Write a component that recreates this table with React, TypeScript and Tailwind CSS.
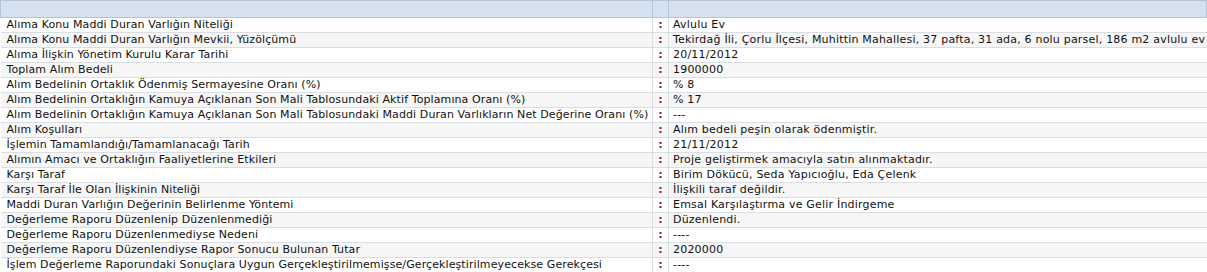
import React from 'react';

const rows: [string, string][] = [
    ['Alıma Konu Maddi Duran Varlığın Niteliği', 'Avlulu Ev'],
    ['Alıma Konu Maddi Duran Varlığın Mevkii, Yüzölçümü', 'Tekirdağ İli, Çorlu İlçesi, Muhittin Mahallesi, 37 pafta, 31 ada, 6 nolu parsel, 186 m2 avlulu ev'],
    ['Alıma İlişkin Yönetim Kurulu Karar Tarihi', '20/11/2012'],
    ['Toplam Alım Bedeli', '1900000'],
    ['Alım Bedelinin Ortaklık Ödenmiş Sermayesine Oranı (%)', '% 8'],
    ['Alım Bedelinin Ortaklığın Kamuya Açıklanan Son Mali Tablosundaki Aktif Toplamına Oranı (%)', '% 17'],
    ['Alım Bedelinin Ortaklığın Kamuya Açıklanan Son Mali Tablosundaki Maddi Duran Varlıkların Net Değerine Oranı (%)', '---'],
    ['Alım Koşulları', 'Alım bedeli peşin olarak ödenmiştir.'],
    ['İşlemin Tamamlandığı/Tamamlanacağı Tarih', '21/11/2012'],
    ['Alımın Amacı ve Ortaklığın Faaliyetlerine Etkileri', 'Proje geliştirmek amacıyla satın alınmaktadır.'],
    ['Karşı Taraf', 'Birim Dökücü, Seda Yapıcıoğlu, Eda Çelenk'],
    ['Karşı Taraf İle Olan İlişkinin Niteliği', 'İlişkili taraf değildir.'],
    ['Maddi Duran Varlığın Değerinin Belirlenme Yöntemi', 'Emsal Karşılaştırma ve Gelir İndirgeme'],
    ['Değerleme Raporu Düzenlenip Düzenlenmediği', 'Düzenlendi.'],
    ['Değerleme Raporu Düzenlenmediyse Nedeni', '----'],
    ['Değerleme Raporu Düzenlendiyse Rapor Sonucu Bulunan Tutar', '2020000'],
    ['İşlem Değerleme Raporundaki Sonuçlara Uygun Gerçekleştirilmemişse/Gerçekleştirilmeyecekse Gerekçesi', '----'],
];

const App: React.FC = () => {
    return (
        <div className="w-[1207px] h-[272px] overflow-hidden bg-white font-['DejaVu_Sans',Verdana,sans-serif] text-[11px] tracking-[0.1px] text-[#111]">
            <table className="w-full table-fixed border-collapse">
                <colgroup>
                    <col className="w-[652px]" />
                    <col className="w-[16px]" />
                    <col />
                </colgroup>
                <thead>
                    <tr className="h-[17px] bg-[#d5e1ef]">
                        <th className="border border-[#b4c4d8] p-0"></th>
                        <th className="border border-[#b4c4d8] p-0"></th>
                        <th className="border border-[#b4c4d8] p-0"></th>
                    </tr>
                </thead>
                <tbody>
                    {rows.map(([label, value], i) => (
                        <tr key={i} className={`h-[15px] ${i % 2 === 1 ? 'bg-[#f6f6f6]' : 'bg-white'}`}>
                            <td className="border-b border-r border-[#d9dee4] pl-[6px] p-0 leading-[14px] whitespace-nowrap overflow-hidden">{label}</td>
                            <td className="border-b border-r border-[#d9dee4] p-0 leading-[14px] text-center font-bold text-[#8a1d3b]">:</td>
                            <td className="border-b border-[#d9dee4] pl-[4px] p-0 leading-[14px] tracking-[0.2px] whitespace-nowrap overflow-hidden">{value}</td>
                        </tr>
                    ))}
                </tbody>
            </table>
        </div>
    );
};

export default App;
